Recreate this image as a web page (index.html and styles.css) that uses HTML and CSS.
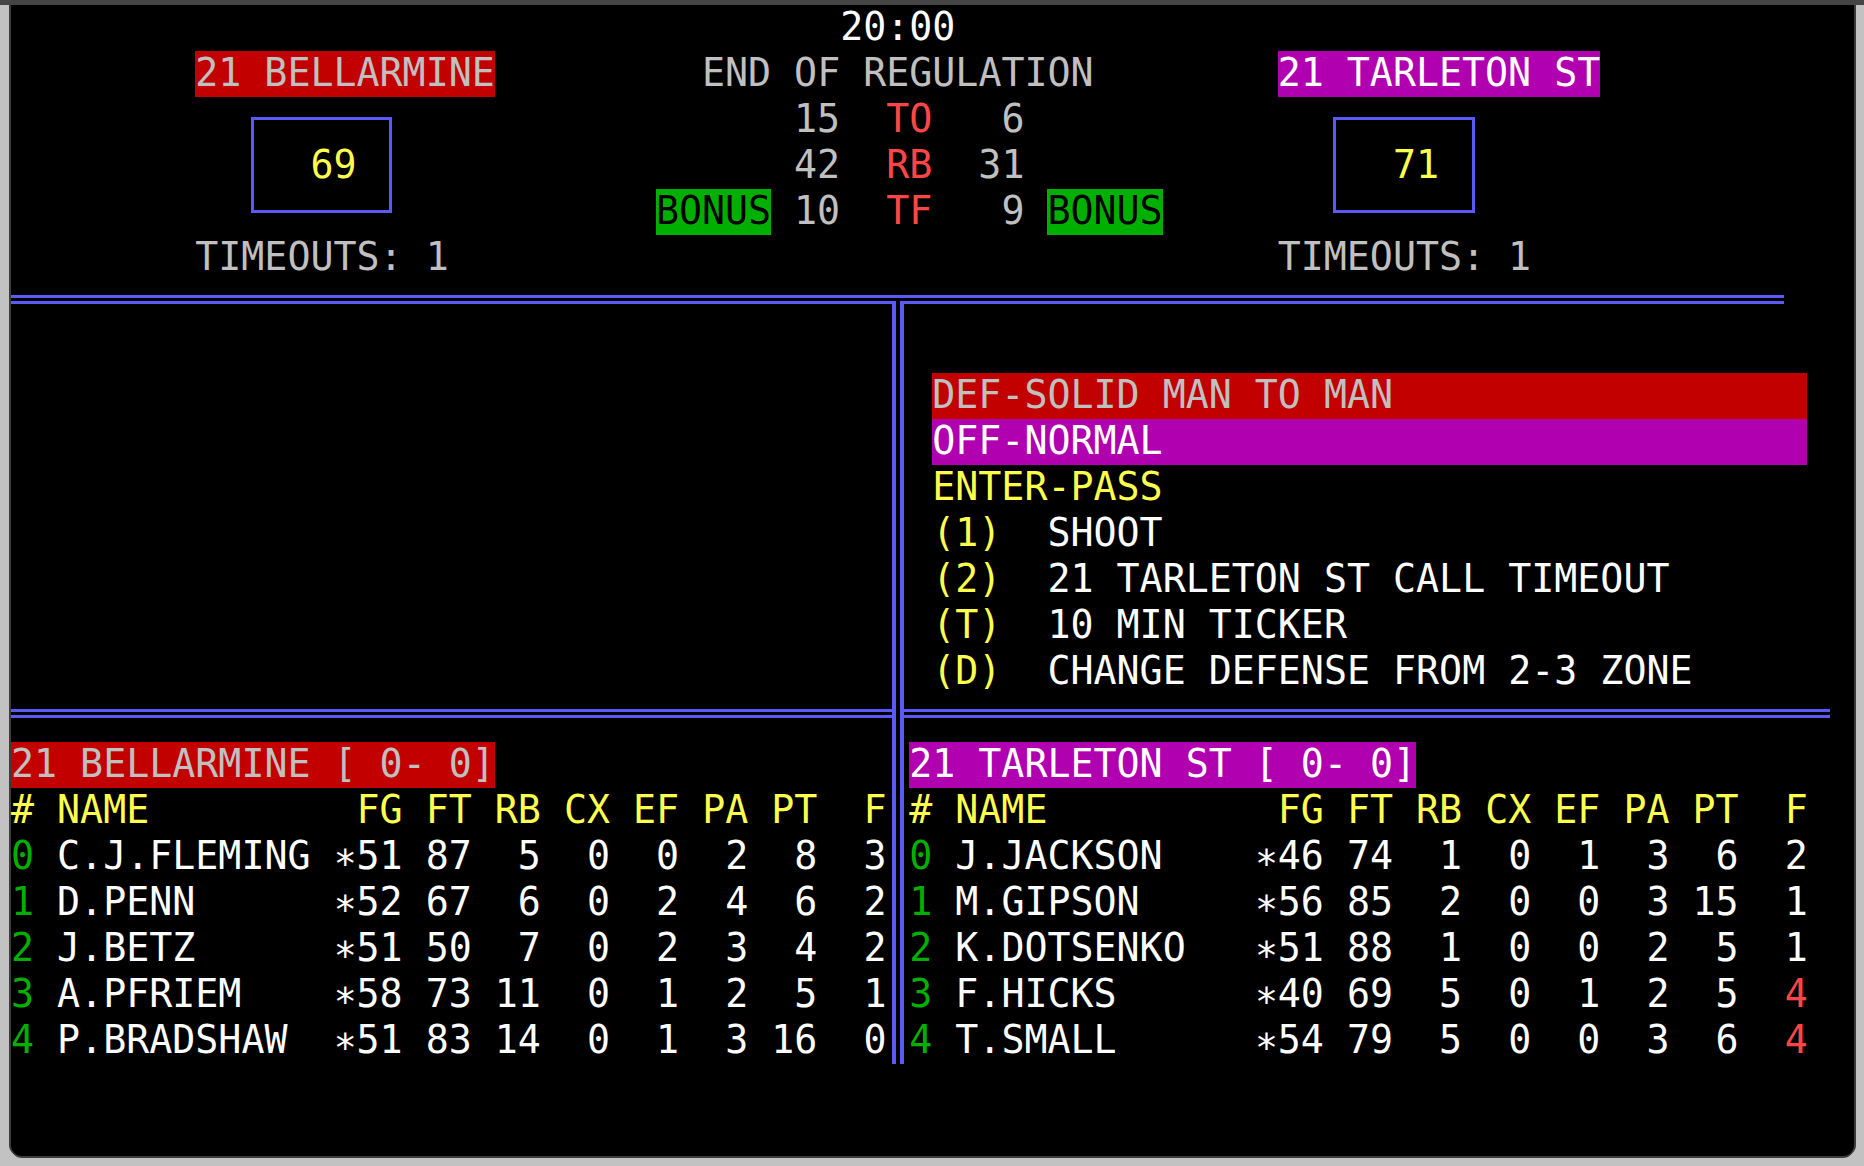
FILE: index.html
```html
<!DOCTYPE html>
<html lang="en">
<head>
<meta charset="utf-8">
<title>Basketball — End of Regulation</title>
<link rel="stylesheet" href="styles.css">
</head>
<body>
<div class="chrome"></div>
<main class="screen">
  <div class="clock white">20:00</div>

  <div class="team-tag home-tag bar-red gray">21 BELLARMINE</div>
  <div class="period gray">END OF REGULATION</div>
  <div class="team-tag away-tag bar-mag white">21 TARLETON ST</div>

  <div class="score-box home-box"></div>
  <div class="score home-score yellow">69</div>
  <div class="score-box away-box"></div>
  <div class="score away-score yellow">71</div>

  <div class="stat-line stat-to gray">15  <span class="lred">TO</span>   6</div>
  <div class="stat-line stat-rb gray">42  <span class="lred">RB</span>  31</div>
  <div class="bonus home-bonus">BONUS</div>
  <div class="stat-line stat-tf gray">10  <span class="lred">TF</span>   9</div>
  <div class="bonus away-bonus">BONUS</div>

  <div class="timeouts home-to gray">TIMEOUTS: 1</div>
  <div class="timeouts away-to gray">TIMEOUTS: 1</div>

  <div class="rule rule-top"></div>
  <div class="rule rule-mid"></div>
  <div class="divider"></div>

  <div class="menu">
    <div class="line bar-red gray">DEF-SOLID MAN TO MAN</div>
    <div class="line bar-mag white">OFF-NORMAL</div>
    <div class="line yellow">ENTER-PASS</div>
    <div class="line white"><span class="yellow">(1)</span>  SHOOT</div>
    <div class="line white"><span class="yellow">(2)</span>  21 TARLETON ST CALL TIMEOUT</div>
    <div class="line white"><span class="yellow">(T)</span>  10 MIN TICKER</div>
    <div class="line white"><span class="yellow">(D)</span>  CHANGE DEFENSE FROM 2-3 ZONE</div>
  </div>

  <section class="roster roster-home">
    <div class="line title"><span class="bar-red gray">21 BELLARMINE [ 0- 0]</span></div>
    <div class="line yellow"># NAME         FG FT RB CX EF PA PT  F</div>
    <div class="line white"><span class="green">0</span> C.J.FLEMING ∗51 87  5  0  0  2  8  3</div>
    <div class="line white"><span class="green">1</span> D.PENN      ∗52 67  6  0  2  4  6  2</div>
    <div class="line white"><span class="green">2</span> J.BETZ      ∗51 50  7  0  2  3  4  2</div>
    <div class="line white"><span class="green">3</span> A.PFRIEM    ∗58 73 11  0  1  2  5  1</div>
    <div class="line white"><span class="green">4</span> P.BRADSHAW  ∗51 83 14  0  1  3 16  0</div>
  </section>

  <section class="roster roster-away">
    <div class="line title"><span class="bar-mag white">21 TARLETON ST [ 0- 0]</span></div>
    <div class="line yellow"># NAME          FG FT RB CX EF PA PT  F</div>
    <div class="line white"><span class="green">0</span> J.JACKSON    ∗46 74  1  0  1  3  6  2</div>
    <div class="line white"><span class="green">1</span> M.GIPSON     ∗56 85  2  0  0  3 15  1</div>
    <div class="line white"><span class="green">2</span> K.DOTSENKO   ∗51 88  1  0  0  2  5  1</div>
    <div class="line white"><span class="green">3</span> F.HICKS      ∗40 69  5  0  1  2  5  <span class="lred">4</span></div>
    <div class="line white"><span class="green">4</span> T.SMALL      ∗54 79  5  0  0  3  6  <span class="lred">4</span></div>
  </section>
</main>
</body>
</html>
```

FILE: styles.css
```css
:root {
  --col: 23.04px;
  --row: 46.04px;
  --blue: #5a5af8;
  --red-bg: #c20000;
  --mag-bg: #b000b0;
  --green-bg: #00b000;
}

html, body {
  margin: 0;
  padding: 0;
}

body {
  background: #c2c2c2;
  width: 1864px;
  height: 1166px;
  overflow: hidden;
  font-family: "DejaVu Sans Mono", "Liberation Mono", monospace;
  font-size: 38.27px;
}

.chrome {
  height: 5px;
  background: #454545;
}

.screen {
  margin-left: 11px;
  width: calc(var(--col) * 80);
  height: calc(var(--row) * 25);
  background: #000;
  border-radius: 0 0 11px 11px;
  box-shadow: -2px 0 0 #3c3c3c, 2px 0 0 #3c3c3c, 0 2px 0 #3c3c3c;
  display: grid;
  grid-template-columns: repeat(80, var(--col));
  grid-template-rows: repeat(25, var(--row));
  line-height: 43.5px;
  white-space: pre;
}

/* colours */
.white { color: #ffffff; }
.gray { color: #c0c0c0; }
.yellow { color: #ffff4e; }
.lred { color: #ff4646; }
.green { color: #00b000; }

.bar-red { background: var(--red-bg); }
.bar-mag { background: var(--mag-bg); }

/* ---- top scoreboard ---- */
.clock { grid-row: 1; grid-column: 37 / span 5; }

.team-tag { grid-row: 2; }
.home-tag { grid-column: 9 / span 13; }
.away-tag { grid-column: 56 / span 14; }

.period { grid-row: 2; grid-column: 31 / span 17; }

.score-box {
  grid-row: 3 / 6;
  margin: 20px 10.3px 22.2px 9.6px;
  border: 3.5px solid var(--blue);
}
.home-box { grid-column: 11 / 18; }
.away-box { grid-column: 58 / 65; }

.score { grid-row: 4; }
.home-score { grid-column: 14 / span 2; }
.away-score { grid-column: 61 / span 2; }

.stat-line { grid-column: 35 / span 10; }
.stat-to { grid-row: 3; }
.stat-rb { grid-row: 4; }
.stat-tf { grid-row: 5; }

.bonus {
  grid-row: 5;
  background: var(--green-bg);
  color: #000;
}
.home-bonus { grid-column: 29 / span 5; }
.away-bonus { grid-column: 46 / span 5; }

.timeouts { grid-row: 6; }
.home-to { grid-column: 9 / span 11; }
.away-to { grid-column: 56 / span 11; }

/* ---- double rules ---- */
.rule {
  align-self: start;
  margin-top: 14px;
  height: 2.6px;
  border-top: 3.3px solid var(--blue);
  border-bottom: 3.3px solid var(--blue);
}
.rule-top { grid-row: 7; grid-column: 1 / 78; }
.rule-mid { grid-row: 16; grid-column: 1 / 80; }

.divider {
  grid-row: 7 / 24;
  grid-column: 39;
  justify-self: start;
  margin-top: 19.9px;
  margin-left: 6px;
  width: 3.5px;
  border-left: 4px solid var(--blue);
  border-right: 4.5px solid var(--blue);
  background: #000;
}

/* ---- menu ---- */
.menu {
  grid-row: 9 / 16;
  grid-column: 41 / 79;
  display: flex;
  flex-direction: column;
}

.line {
  height: var(--row);
}

/* ---- rosters ---- */
.roster {
  grid-row: 17 / 24;
  display: flex;
  flex-direction: column;
}
.roster-home { grid-column: 1 / 39; }
.roster-away { grid-column: 40 / 81; }

.title {
  display: flex;
}
```
